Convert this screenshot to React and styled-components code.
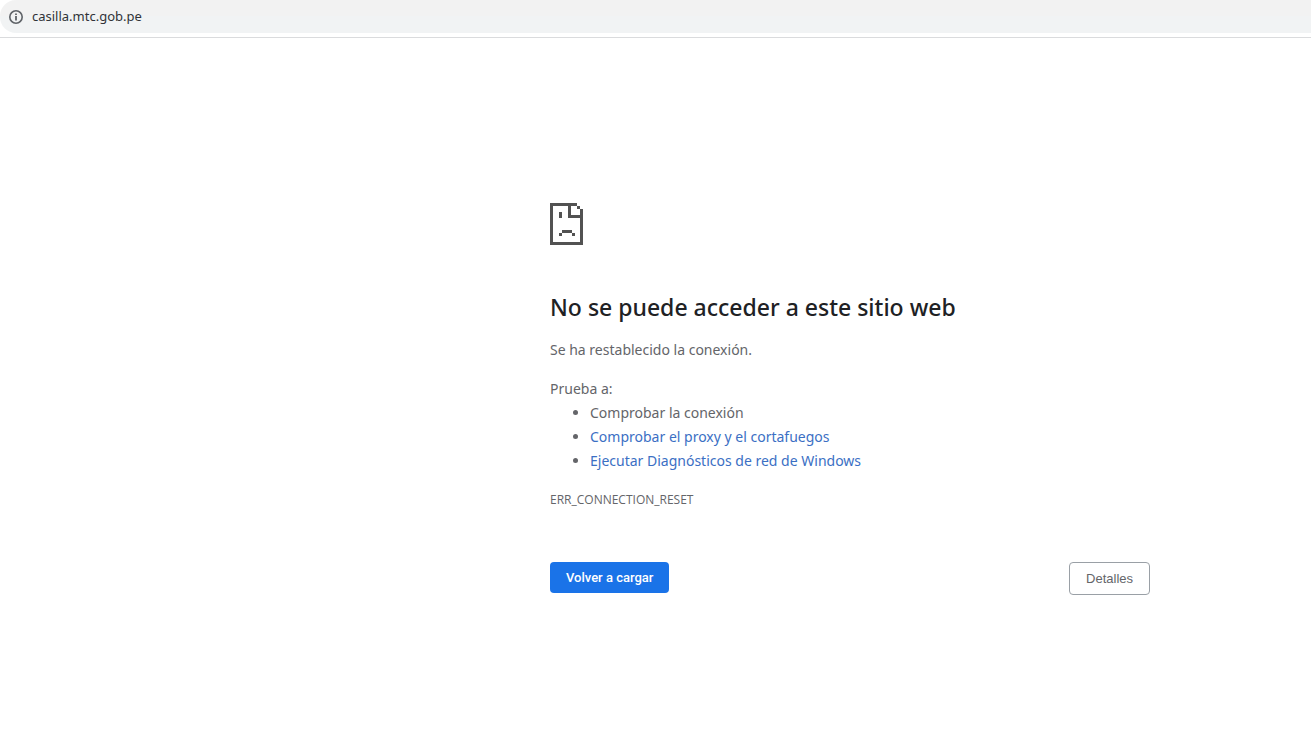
import React from 'react';
import styled, { createGlobalStyle } from 'styled-components';

const GlobalStyle = createGlobalStyle`
  * {
    box-sizing: border-box;
  }
  body {
    margin: 0;
    background: #fff;
    color: #646569;
    font-family: "Noto Sans", "Open Sans", sans-serif;
    font-size: 14px;
    line-height: 24px;
  }
`;

const Toolbar = styled.header`
  height: 38px;
  border-bottom: 1px solid #dadbdd;
`;

const AddressBar = styled.div`
  display: flex;
  align-items: center;
  gap: 8px;
  height: 33px;
  padding: 0 8px;
  background: linear-gradient(#f2f2f2 50%, #f1f3f4 50%);
  border-radius: 16px 0 0 16px;
`;

const Address = styled.input`
  flex: 1;
  min-width: 0;
  height: 20px;
  padding: 0 0 2px;
  border: 0;
  outline: 0;
  background: transparent;
  color: #303338;
  font-family: inherit;
  font-size: 13px;
`;

const ErrorPage = styled.main`
  max-width: 1150px;
  padding: 165px 0 32px 550px;
`;

const Title = styled.h1`
  margin: 46px 0 15px;
  color: #202124;
  font-size: 23px;
  font-weight: 500;
  line-height: 32px;
`;

const Text = styled.p`
  margin: 0;
`;

const Suggestions = styled.section`
  margin-top: 15px;
`;

const SuggestionList = styled.ul`
  margin: 0;
  padding-left: 40px;
`;

const SuggestionLink = styled.a`
  color: #3b6fc4;
  text-decoration: none;
`;

const ErrorCode = styled.div`
  margin-top: 15px;
  font-family: "Open Sans", sans-serif;
  font-size: 12px;
`;

const Buttons = styled.div`
  display: flex;
  align-items: flex-start;
  justify-content: space-between;
  margin-top: 50px;
`;

const Button = styled.button`
  height: ${props => (props.$primary ? '31px' : '33px')};
  padding: 0 16px;
  border: ${props => (props.$primary ? '0' : '1px solid #9aa0a6')};
  border-radius: 4px;
  background: ${props => (props.$primary ? '#1a73e8' : '#fff')};
  color: ${props => (props.$primary ? '#fff' : '#646569')};
  font-family: ${props => (props.$primary ? 'Roboto' : '"Liberation Sans"')}, sans-serif;
  font-size: 13px;
  font-weight: ${props => (props.$primary ? 500 : 400)};
  cursor: pointer;
`;

const Icon = styled.svg`
  display: block;
  flex: none;
`;

const InfoIcon = () => (
  <Icon width="16" height="16" viewBox="0 0 16 16" aria-hidden="true">
    <circle cx="8" cy="8" r="6.2" fill="none" stroke="#5f6368" strokeWidth="1.6" />
    <path d="M7.1 7h1.8v4.4H7.1zM7.1 4.5h1.8v1.6H7.1z" fill="#5f6368" />
  </Icon>
);

// sad page, drawn on an 11x14 grid
const SadPage = () => (
  <Icon width="33" height="42" viewBox="0 0 11 14" fill="#525252" shapeRendering="crispEdges" aria-hidden="true">
    <path d="M0 0h9v1H0zM0 1h1v12H0zM0 13h11v1H0zM10 2h1v11h-1zM9 1h1v1H9zM6 1h1v4H6zM7 4h3v1H7z" />
    <path d="M3 3h1v2H3zM4 9h3.4v1H4zM3 10h1v1H3zM7.4 10h1v1h-1z" />
  </Icon>
);

export default function App() {
  return (
    <>
      <GlobalStyle />
      <Toolbar>
        <AddressBar>
          <InfoIcon />
          <Address aria-label="URL" defaultValue="casilla.mtc.gob.pe" />
        </AddressBar>
      </Toolbar>
      <ErrorPage>
        <SadPage />
        <Title>No se puede acceder a este sitio web</Title>
        <Text>Se ha restablecido la conexión.</Text>
        <Suggestions>
          <Text>Prueba a:</Text>
          <SuggestionList>
            <li>Comprobar la conexión</li>
            <li><SuggestionLink href="#proxy">Comprobar el proxy y el cortafuegos</SuggestionLink></li>
            <li><SuggestionLink href="#diagnose">Ejecutar Diagnósticos de red de Windows</SuggestionLink></li>
          </SuggestionList>
        </Suggestions>
        <ErrorCode>ERR_CONNECTION_RESET</ErrorCode>
        <Buttons>
          <Button type="button" $primary>Volver a cargar</Button>
          <Button type="button">Detalles</Button>
        </Buttons>
      </ErrorPage>
    </>
  );
}
